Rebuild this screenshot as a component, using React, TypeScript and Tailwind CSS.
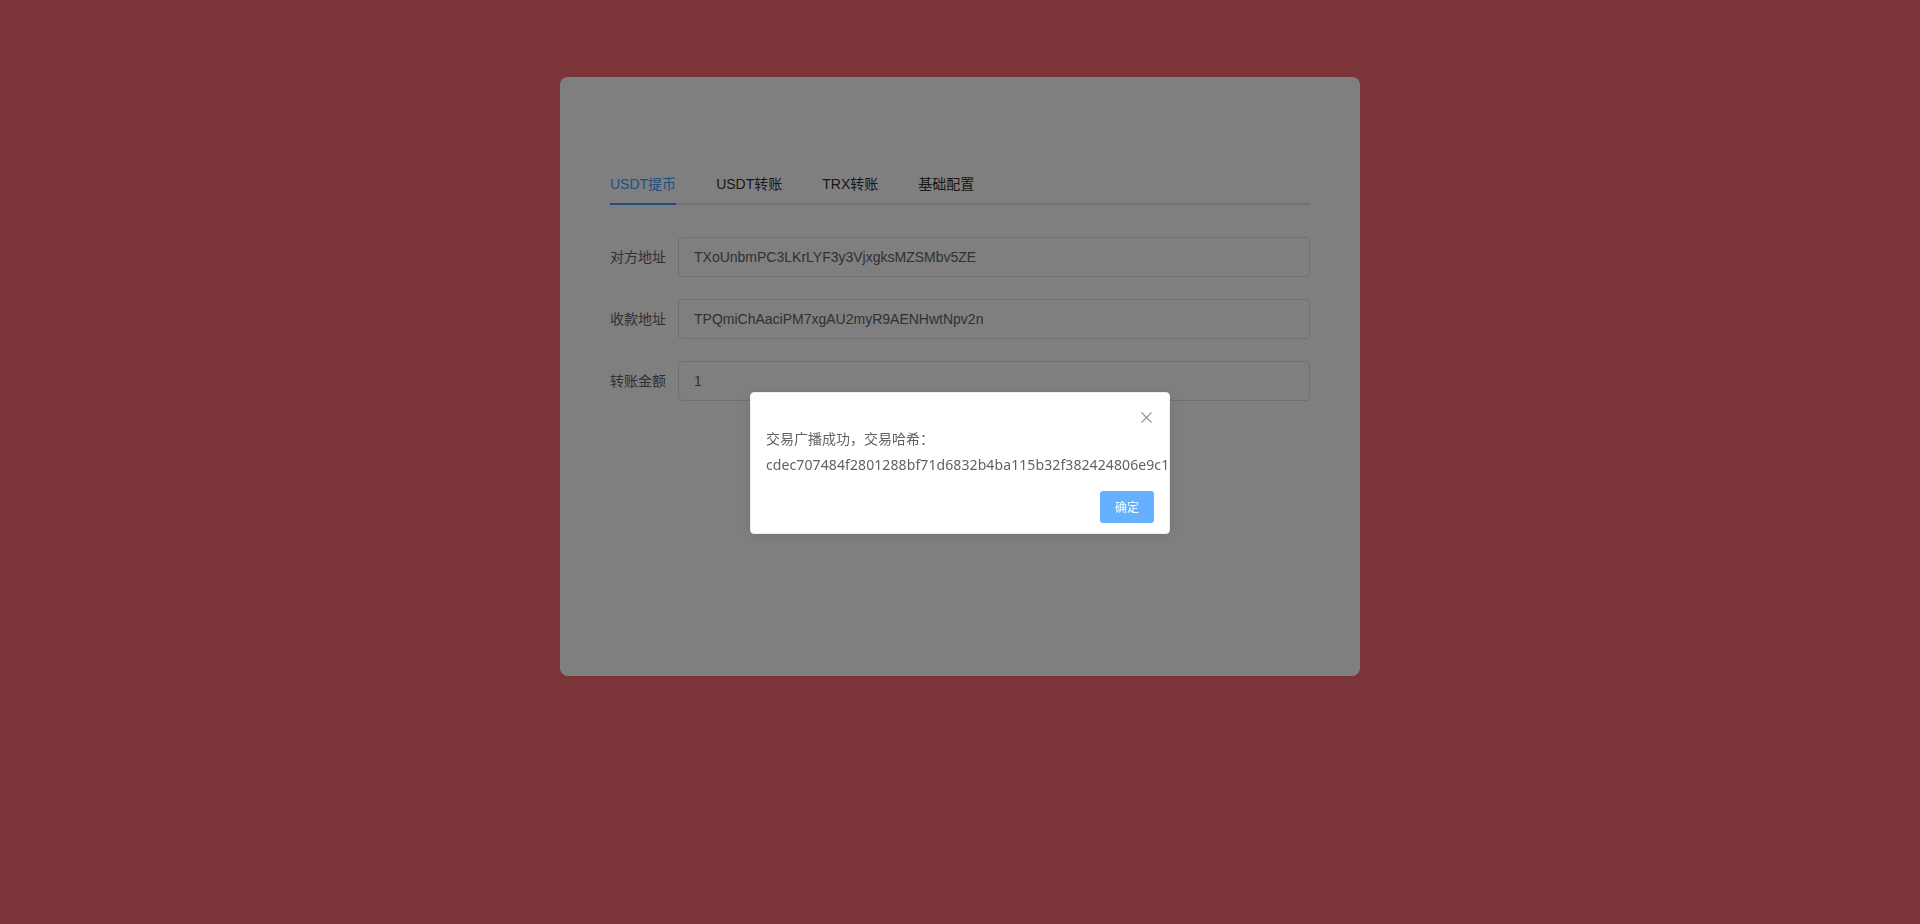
import { useState } from 'react';

const TABS = ['USDT提币', 'USDT转账', 'TRX转账', '基础配置'];

const FIELDS = [
  { label: '对方地址', value: 'TXoUnbmPC3LKrLYF3y3VjxgksMZSMbv5ZE' },
  { label: '收款地址', value: 'TPQmiChAaciPM7xgAU2myR9AENHwtNpv2n' },
  { label: '转账金额', value: '1' },
];

const HASH = 'cdec707484f2801288bf71d6832b4ba115b32f382424806e9c1';

const App = () => {
  const [active, setActive] = useState(0);
  const [open, setOpen] = useState(true);

  return (
    <div className="min-h-screen bg-[#f7696e] font-['Liberation_Sans','Noto_Sans_CJK_SC',sans-serif]">
      <div className="flex justify-center pt-[77px]">
        <div className="h-[599px] w-[800px] rounded-lg bg-white px-[50px] pt-[88px]">
          <div className="flex border-b-2 border-[#e4e7ed]">
            {TABS.map((tab, i) => (
              <button
                key={tab}
                onClick={() => setActive(i)}
                className={
                  'mb-[-2px] h-10 text-[14px] ' +
                  (i === 0 ? 'pr-5 ' : 'px-5 ') +
                  (i === active ? 'text-[#409eff]' : 'text-[#303133]')
                }
              >
                <span
                  className={
                    'block h-full border-b-2 leading-[38px] ' +
                    (i === active ? 'border-[#409eff]' : 'border-transparent')
                  }
                >
                  {tab}
                </span>
              </button>
            ))}
          </div>

          <div className="mt-8">
            {FIELDS.map((f) => (
              <div key={f.label} className="mb-[22px] flex items-center">
                <label className="w-[68px] shrink-0 pr-3 text-right text-[14px] leading-10 text-[#606266]">
                  {f.label}
                </label>
                <input
                  readOnly
                  value={f.value}
                  className="h-10 flex-1 rounded border border-[#dcdfe6] bg-white px-[15px] text-[14px] text-[#606266] outline-none"
                />
              </div>
            ))}
          </div>
        </div>
      </div>

      {open && (
        <>
          <div className="fixed inset-0 bg-black/50" />
          <div className="fixed inset-0 flex items-center justify-center">
            <div className="relative mt-[2px] w-[420px] overflow-hidden rounded border border-[#ebeef5] bg-white pb-[10px] shadow-[0_2px_12px_rgba(0,0,0,0.1)]">
              <button
                onClick={() => setOpen(false)}
                className="absolute right-[15px] top-[16px] flex h-4 w-4 items-center justify-center text-[#909399]"
              >
                <svg width="11" height="11" viewBox="0 0 11 11" fill="none">
                  <path
                    d="M0.5 0.5L10.5 10.5M10.5 0.5L0.5 10.5"
                    stroke="currentColor"
                    strokeWidth="1.1"
                  />
                </svg>
              </button>
              <div className="h-[33px]" />
              <div className="px-[15px] text-[14px] text-[#606266]">
                <p className="font-['Noto_Sans_CJK_SC',sans-serif] leading-6">
                  交易广播成功，交易哈希：
                </p>
                <p className="mt-[3px] whitespace-nowrap font-['Noto_Sans',sans-serif] leading-6 tracking-[0.1px]">
                  {HASH}
                </p>
              </div>
              <div className="flex justify-end px-[15px] pt-[14px]">
                <button
                  onClick={() => setOpen(false)}
                  className="h-8 rounded-[3px] bg-[#66b1ff] px-[15px] font-['Noto_Sans_CJK_SC',sans-serif] text-[12px] text-white"
                >
                  确定
                </button>
              </div>
            </div>
          </div>
        </>
      )}
    </div>
  );
};

export default App;
